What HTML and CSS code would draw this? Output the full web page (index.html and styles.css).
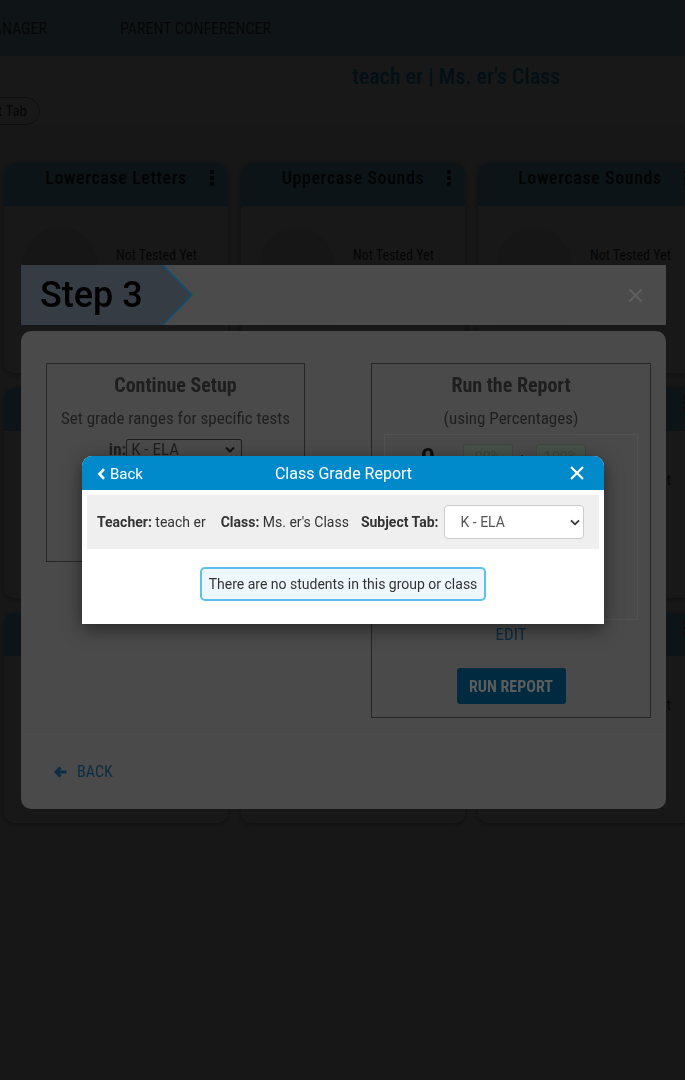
FILE: index.html
```html
<!DOCTYPE html>
<html lang="en">
<head>
<meta charset="utf-8">
<title>Class Grade Report</title>
<link rel="stylesheet" href="styles.css">
</head>
<body>
<div class="page">
  <nav class="topnav">
    <div class="nav-cut"><a class="nav-link">Class Manager</a></div>
    <a class="nav-link">Parent Conferencer</a>
  </nav>
  <header class="page-head">
    <h1 class="class-title">teach er | Ms. er's Class</h1>
  </header>
  <div class="tab-row">
    <div class="tab-cut"><span class="pill">Subject Tab</span></div>
  </div>
  <div class="card-grid">
    <div class="card"><div class="card-head"><span class="card-title">Lowercase Letters</span><span class="kebab"><i></i><i></i><i></i></span></div><div class="card-body"><span class="donut"></span><span class="not-tested">Not Tested Yet</span></div></div>
    <div class="card"><div class="card-head"><span class="card-title">Uppercase Sounds</span><span class="kebab"><i></i><i></i><i></i></span></div><div class="card-body"><span class="donut"></span><span class="not-tested">Not Tested Yet</span></div></div>
    <div class="card"><div class="card-head"><span class="card-title">Lowercase Sounds</span><span class="kebab"><i></i><i></i><i></i></span></div><div class="card-body"><span class="donut"></span><span class="not-tested">Not Tested Yet</span></div></div>
    <div class="card"><div class="card-head"><span class="card-title">Sight Words</span><span class="kebab"><i></i><i></i><i></i></span></div><div class="card-body"><span class="donut"></span><span class="not-tested">Not Tested Yet</span></div></div>
    <div class="card"><div class="card-head"><span class="card-title">Rhyming</span><span class="kebab"><i></i><i></i><i></i></span></div><div class="card-body"><span class="donut"></span><span class="not-tested">Not Tested Yet</span></div></div>
    <div class="card"><div class="card-head"><span class="card-title">Blending</span><span class="kebab"><i></i><i></i><i></i></span></div><div class="card-body"><span class="donut"></span><span class="not-tested">Not Tested Yet</span></div></div>
    <div class="card"><div class="card-head"><span class="card-title">Segmenting</span><span class="kebab"><i></i><i></i><i></i></span></div><div class="card-body"><span class="donut"></span><span class="not-tested">Not Tested Yet</span></div></div>
    <div class="card"><div class="card-head"><span class="card-title">Syllables</span><span class="kebab"><i></i><i></i><i></i></span></div><div class="card-body"><span class="donut"></span><span class="not-tested">Not Tested Yet</span></div></div>
    <div class="card"><div class="card-head"><span class="card-title">Numbers</span><span class="kebab"><i></i><i></i><i></i></span></div><div class="card-body"><span class="donut"></span><span class="not-tested">Not Tested Yet</span></div></div>
  </div>
</div>

<div class="backdrop"></div>

<!-- inactive (dimmed) wizard dialog beneath the active report dialog -->
<div class="step-dialog is-inactive">
  <div class="step-bar">
    <div class="step-chevron">
      <svg class="chevron-shape" width="172" height="60" viewBox="0 0 172 60" aria-hidden="true">
        <polygon points="0,0 142,0 171,30 142,60 0,60" fill="#353c44"/>
        <polyline points="142,0 171,30 142,60" fill="none" stroke="#0d5177" stroke-width="1.5"/>
      </svg>
      <span class="step-label">Step 3</span>
    </div>
    <button class="step-close" aria-label="Close">
      <svg width="15" height="15" viewBox="0 0 15 15"><path d="M1.5 1.5 L13.5 13.5 M13.5 1.5 L1.5 13.5" stroke="#5e5e5e" stroke-width="2.4" fill="none"/></svg>
    </button>
  </div>
  <div class="step-body">
    <div class="step-panels">
      <section class="panel panel-setup">
        <h2 class="panel-title">Continue Setup</h2>
        <p class="panel-text">Set grade ranges for specific tests</p>
        <div class="in-row"><b>in:</b><span class="mini-select">K - ELA<svg width="10" height="7" viewBox="0 0 10 7"><path d="M1 1.5 L5 5.5 L9 1.5" stroke="#111" stroke-width="2" fill="none"/></svg></span></div>
      </section>
      <section class="panel panel-run">
        <h2 class="panel-title">Run the Report</h2>
        <p class="panel-text">(using Percentages)</p>
        <div class="range-box">
          <div class="range-row">
            <span class="range-zero">0</span>
            <span class="range-input">90%</span>
            <span class="range-arrow">&#9656;</span>
            <span class="range-input">100%</span>
          </div>
        </div>
        <a class="edit-link">EDIT</a>
        <button class="run-btn">RUN REPORT</button>
      </section>
    </div>
    <footer class="step-footer">
      <a class="back-link">
        <svg width="13" height="12" viewBox="0 0 13 12"><path d="M6.5 1.5 L2 6 L6.5 10.5 M2.5 6 H12.5" stroke="#0b2c42" stroke-width="3" fill="none"/></svg>
        <span>BACK</span>
      </a>
    </footer>
  </div>
</div>

<div class="report-dialog" role="dialog">
  <div class="report-head">
    <a class="report-back">
      <svg width="9" height="12" viewBox="0 0 9 12"><path d="M7 1.2 L2.4 6 L7 10.8" stroke="#fff" stroke-width="2.6" fill="none"/></svg>
      <span>Back</span>
    </a>
    <h3 class="report-title">Class Grade Report</h3>
    <button class="report-close" aria-label="Close">
      <svg width="14" height="14" viewBox="0 0 14 14"><path d="M1 1 L13 13 M13 1 L1 13" stroke="#fff" stroke-width="2.2" fill="none"/></svg>
    </button>
  </div>
  <div class="report-body">
    <div class="info-bar">
      <span class="info-item"><b>Teacher:</b> teach er</span>
      <span class="info-item"><b>Class:</b> Ms. er's Class</span>
      <label class="info-item subject">
        <b>Subject Tab:</b>
        <span class="select-wrap">
          <select class="subject-select"><option>K - ELA</option></select>
          <svg class="select-caret" width="10" height="7" viewBox="0 0 10 7"><path d="M1 1.3 L5 5.3 L9 1.3" stroke="#333" stroke-width="1.8" fill="none"/></svg>
        </span>
      </label>
    </div>
    <div class="empty-msg">There are no students in this group or class</div>
  </div>
</div>
</body>
</html>
```
FILE: styles.css
```css
* { box-sizing: border-box; }
html, body { margin: 0; padding: 0; }
body {
  width: 685px;
  height: 1080px;
  overflow: hidden;
  position: relative;
  background: #eeeeee;
  color: #333;
  font-family: Roboto, "Liberation Sans", sans-serif;
}

/* ---------- background page ---------- */
.page { width: 685px; }
.topnav {
  height: 56px;
  background: #a2dfee;
  display: flex;
  align-items: center;
  gap: 73px;
  font-family: "Roboto Condensed", "Liberation Sans Narrow", Roboto, sans-serif;
  font-size: 16px;
  text-transform: uppercase;
  color: #444;
}
.nav-cut { width: 47px; display: flex; justify-content: flex-end; white-space: nowrap; }
.nav-link { white-space: nowrap; }

.page-head { height: 41px; padding-left: 352px; display: flex; align-items: center; background: #fff; }
.class-title {
  margin: 0;
  font-family: "Roboto Condensed", "Liberation Sans Narrow", Roboto, sans-serif;
  font-size: 22px;
  font-weight: 500;
  color: #1ca7e8;
}
.tab-row { height: 28px; display: flex; background: #fff; }
.tab-cut { width: 40px; display: flex; justify-content: flex-end; }
.pill {
  height: 28px;
  display: flex;
  align-items: center;
  padding: 0 12px;
  border: 1px solid #999;
  border-radius: 14px;
  white-space: nowrap;
  font-family: "Roboto Condensed", "Liberation Sans Narrow", Roboto, sans-serif;
  font-size: 15px;
  color: #444;
}
.card-grid {
  margin-top: 38px;
  padding-left: 4px;
  display: grid;
  grid-template-columns: repeat(3, 224px);
  grid-auto-rows: 210px;
  column-gap: 13px;
  row-gap: 15px;
}
.card {
  background: #fff;
  border-radius: 10px;
  overflow: hidden;
  box-shadow: 0 1px 5px rgba(0,0,0,.35);
}
.card-head {
  height: 43px;
  background: #86d5f8;
  position: relative;
  display: flex;
  align-items: center;
  justify-content: center;
}
.card-title {
  font-family: "Roboto Condensed", "Liberation Sans Narrow", Roboto, sans-serif;
  font-size: 18px;
  font-weight: 500;
  letter-spacing: .6px;
  color: #222;
  margin-top: -14px;
}
.kebab {
  position: absolute;
  right: 14px;
  top: 7px;
  display: flex;
  flex-direction: column;
  gap: 2px;
}
.kebab i { width: 4px; height: 4px; background: #333; border-radius: 1px; }
.card-body { padding: 21px 0 0 19px; display: flex; }
.donut { width: 74px; height: 100px; border-radius: 37px 37px 0 0; background: #e3e3e3; }
.not-tested {
  margin-left: 19px;
  margin-top: 20px;
  font-family: "Roboto Condensed", "Liberation Sans Narrow", Roboto, sans-serif;
  font-size: 14px;
  color: #333;
}

/* ---------- modal backdrop (two stacked backdrops combined) ---------- */
.backdrop {
  position: fixed;
  top: 0;
  left: 0;
  width: 685px;
  height: 1080px;
  background-color: rgba(0, 0, 0, 0.906);
}

/* ---------- inactive step dialog (shown dimmed) ---------- */
.step-dialog { position: absolute; top: 265px; left: 21px; width: 645px; }
.step-bar {
  height: 60px;
  background: #4b4b4b;
  display: flex;
  align-items: center;
  justify-content: space-between;
}
.step-chevron {
  position: relative;
  width: 172px;
  height: 60px;
  display: flex;
  align-items: center;
  padding-left: 19px;
}
.chevron-shape { position: absolute; left: 0; top: 0; }
.step-label { position: relative; font-size: 36px; font-weight: 500; color: #000; }
.step-close {
  margin-right: 23px;
  width: 15px; height: 15px;
  padding: 0; border: 0; background: none;
  display: flex;
}
.step-body {
  margin-top: 6px;
  height: 478px;
  background: #4a4a4a;
  border-radius: 10px;
  display: flex;
  flex-direction: column;
}
.step-panels {
  padding: 32px 15px 0 25px;
  display: grid;
  grid-template-columns: 259px 280px;
  justify-content: space-between;
  align-items: start;
}
.panel {
  border: 1px solid #262626;
  text-align: center;
  padding-top: 10px;
  font-family: "Roboto Condensed", "Liberation Sans Narrow", Roboto, sans-serif;
  color: #1f1f1f;
}
.panel-setup { height: 199px; }
.panel-run { height: 355px; display: flex; flex-direction: column; align-items: center; }
.panel-title { margin: 0; font-size: 20px; line-height: 22px; font-weight: 700; color: #1e1e1e; }
.panel-text { margin: 12px 0 0; font-size: 17px; line-height: 20px; color: #1f1f1f; }
.in-row {
  margin-top: 11px;
  display: flex;
  justify-content: center;
  align-items: center;
  font-size: 17px;
}
.in-row b { font-weight: 700; }
.mini-select {
  width: 116px;
  height: 20px;
  border: 1px solid #1f1f1f;
  border-radius: 2px;
  display: flex;
  align-items: center;
  justify-content: space-between;
  padding: 0 6px 0 4px;
  text-align: left;
}
.range-box {
  margin-top: 6px;
  width: 254px;
  height: 186px;
  border: 1px solid #525252;
}
.range-row { display: flex; align-items: center; padding: 8px 0 0 36px; }
.range-zero { font-family: Roboto, sans-serif; font-size: 24px; font-weight: 700; color: #0c0c0c; width: 13px; }
.range-input {
  margin-left: 29px;
  width: 50px;
  height: 26px;
  background: #46514a;
  border: 1px solid #3d463f;
  border-radius: 3px;
  font-family: Roboto, sans-serif;
  font-size: 14px;
  color: #3a423c;
  display: flex;
  align-items: center;
  justify-content: center;
}
.range-arrow { margin-left: 8px; font-size: 14px; color: #0c0c0c; }
.range-arrow + .range-input { margin-left: 8px; }
.edit-link { margin-top: 4px; font-size: 17px; line-height: 20px; color: #0b2c42; }
.run-btn {
  margin-top: 24px;
  width: 109px;
  height: 36px;
  border: 0;
  border-radius: 3px;
  background: #002a40;
  color: #5c5c5c;
  font-family: "Roboto Condensed", "Liberation Sans Narrow", Roboto, sans-serif;
  font-size: 16px;
  font-weight: 700;
}
.step-footer {
  margin-top: auto;
  height: 76px;
  border-top: 1px solid #4d4d4d;
  display: flex;
  align-items: center;
  padding-left: 33px;
}
.back-link {
  display: flex;
  align-items: center;
  gap: 10px;
  font-family: "Roboto Condensed", "Liberation Sans Narrow", Roboto, sans-serif;
  font-size: 16px;
  color: #0b2c42;
}

/* ---------- active report dialog ---------- */
.report-dialog {
  position: absolute;
  top: 456px;
  left: 82px;
  width: 522px;
  background: #fff;
  border-radius: 10px 10px 0 0;
  box-shadow: 0 5px 18px rgba(0,0,0,.5);
}
.report-head {
  height: 34px;
  background: #0089cb;
  border-radius: 10px 10px 0 0;
  display: grid;
  grid-template-columns: 1fr auto 1fr;
  align-items: center;
  padding: 0 20px 0 15px;
  color: #fff;
}
.report-back { display: flex; align-items: center; gap: 4px; font-size: 15px; justify-self: start; margin-top: 2px; }
.report-title { margin: 0 0 0 6px; font-size: 16px; font-weight: 400; }
.report-close { justify-self: end; width: 14px; height: 14px; padding: 0; border: 0; background: none; display: flex; }
.report-body { padding: 5px 5px 23px; }
.info-bar {
  height: 54px;
  background: #efefef;
  display: flex;
  align-items: center;
  padding: 0 15px 0 10px;
  font-size: 14px;
  color: #333;
}
.info-item { white-space: nowrap; }
.info-item + .info-item { margin-left: 15px; }
.info-item.subject { margin-left: 12px; }
.info-item b { font-weight: 700; }
.subject { display: flex; align-items: center; gap: 5px; }
.select-wrap { position: relative; display: flex; }
.subject-select {
  appearance: none;
  -webkit-appearance: none;
  width: 140px;
  height: 34px;
  border: 1px solid #ccc;
  border-radius: 4px;
  background: #fff;
  padding: 0 0 0 16px;
  font-family: Roboto, sans-serif;
  font-size: 14px;
  color: #555;
}
.select-caret { position: absolute; right: 4px; top: 14px; }
.empty-msg {
  margin: 18px auto 0;
  width: fit-content;
  height: 34px;
  display: flex;
  align-items: center;
  padding: 0 7px;
  border: 2px solid #5bc0ee;
  border-radius: 5px;
  background: #eef7fd;
  font-size: 14px;
  color: #333;
}
```
